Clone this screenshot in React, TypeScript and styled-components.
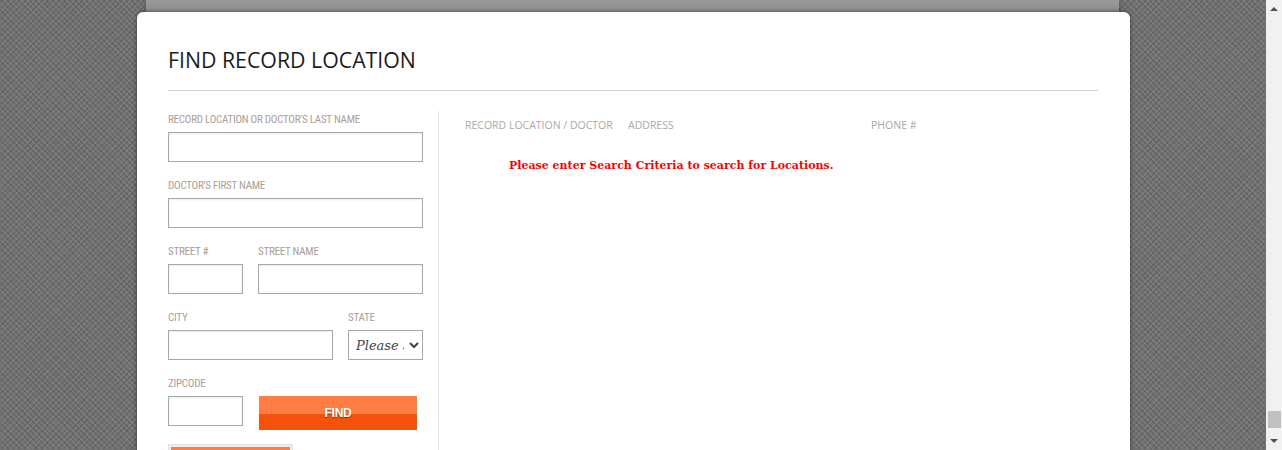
import React from "react";
import styled, { createGlobalStyle } from "styled-components";

const GlobalStyle = createGlobalStyle`
  html, body {
    margin: 0;
    padding: 0;
    height: 450px;
    overflow: hidden;
  }
  * {
    box-sizing: border-box;
  }
`;

const Screen = styled.div`
  display: flex;
  width: 1282px;
  height: 450px;
`;

const Viewport = styled.div`
  position: relative;
  flex: 1;
  height: 450px;
  background-color: #6f6f6f;
  background-image: repeating-linear-gradient(
      45deg,
      rgba(255, 255, 255, 0.05) 0 2px,
      rgba(0, 0, 0, 0.05) 2px 4px
    ),
    repeating-linear-gradient(
      -45deg,
      rgba(255, 255, 255, 0.05) 0 2px,
      rgba(0, 0, 0, 0.05) 2px 4px
    );
  overflow: hidden;
`;

const PagePanel = styled.div`
  margin-left: 146px;
  width: 973px;
  height: 450px;
  background: linear-gradient(#9a9a9a, #8a8a8a 14px, #8a8a8a);
  box-shadow: 0 0 6px rgba(0, 0, 0, 0.35);
`;

const Modal = styled.div`
  position: absolute;
  top: 12px;
  left: 137px;
  width: 993px;
  height: 460px;
  background: #fff;
  border-radius: 6px 6px 0 0;
  box-shadow: 0 0 4px rgba(0, 0, 0, 0.5);
  padding: 0 32px 0 31px;
`;

const Title = styled.h1`
  margin: 0;
  padding: 34px 0 16px;
  font-family: "Open Sans", sans-serif;
  font-weight: 400;
  font-size: 21.3px;
  line-height: 28px;
  color: #1c1c1c;
  border-bottom: 1px solid #cfcfcf;
`;

const Body = styled.div`
  display: flex;
  padding-top: 20px;
`;

const SearchForm = styled.div`
  width: 270px;
  padding-top: 1px;
  padding-right: 15px;
  display: flex;
  flex-direction: column;
  gap: 16px;
`;

const Row = styled.div`
  display: flex;
  gap: 15px;
`;

const Field = styled.div<{ $w: number }>`
  width: ${(p) => p.$w}px;
  display: flex;
  flex-direction: column;
`;

const Label = styled.label`
  font-family: "Liberation Sans Narrow", "Roboto Condensed", "Liberation Sans", sans-serif;
  font-stretch: condensed;
  font-size: 11px;
  letter-spacing: -0.25px;
  line-height: 14px;
  text-transform: uppercase;
  color: #a89e96;
  height: 20px;
  padding-top: 1px;
`;

const TextInput = styled.input`
  width: 100%;
  height: 30px;
  border: 1px solid #a8a8a8;
  box-shadow: inset 0 1px 2px rgba(0, 0, 0, 0.08);
  background: #fff;
  margin: 0;
  padding: 0 6px;
  outline: none;
`;

const Select = styled.select`
  width: 100%;
  height: 30px;
  border: 1px solid #a8a8a8;
  background: #fff;
  margin: 0;
  padding: 0 2px 0 3px;
  font-family: "DejaVu Serif", "Liberation Serif", serif;
  font-style: italic;
  font-size: 13px;
  text-overflow: clip;
  color: #444;
  outline: none;
`;

const ZipRow = styled.div`
  display: flex;
  align-items: flex-end;
  gap: 16px;
`;

const FindButton = styled.button<{ $w: number }>`
  width: ${(p) => p.$w}px;
  height: 34px;
  margin: 0 0 -4px;
  border: 0;
  border-radius: 0;
  background: linear-gradient(#ff7c43 0 52%, #f4520b 52% 100%);
  color: #fff;
  font-family: "Liberation Sans Narrow", "Liberation Sans", sans-serif;
  font-stretch: condensed;
  font-weight: 700;
  font-size: 12px;
  letter-spacing: -0.3px;
  text-shadow: 0 1px 1px rgba(0, 0, 0, 0.45);
  cursor: pointer;
`;

const ButtonFrame = styled.div`
  width: 125px;
  margin-top: 2px;
  padding: 2px 2px;
  border: 1px solid #e2e2e2;
  background: #ececec;
`;

const Results = styled.div`
  flex: 1;
  border-left: 1px solid #e1e1e1;
  min-height: 340px;
  padding-left: 26px;
`;

const HeadRow = styled.div`
  display: flex;
  padding-top: 7px;
  font-family: "Open Sans", sans-serif;
  font-size: 10.5px;
  line-height: 14px;
  color: #a8a8a8;
  text-transform: uppercase;
`;

const HeadCell = styled.div<{ $w: number }>`
  width: ${(p) => p.$w}px;
`;

const Message = styled.p`
  margin: 27px 0 0 44px;
  font-family: "DejaVu Serif", "Liberation Serif", serif;
  font-weight: 700;
  font-size: 11px;
  color: #f00;
`;

const Scrollbar = styled.div`
  width: 16px;
  height: 450px;
  background: #f1f1f1;
  display: flex;
  flex-direction: column;
  align-items: center;
`;

const Arrow = styled.div<{ $down?: boolean }>`
  width: 0;
  height: 0;
  margin: ${(p) => (p.$down ? "6px 0 0" : "7px 0 0")};
  border-left: 4px solid transparent;
  border-right: 4px solid transparent;
  ${(p) =>
    p.$down ? "border-top: 4px solid #505050;" : "border-bottom: 4px solid #505050;"}
`;

const Track = styled.div`
  flex: 1;
  width: 100%;
  display: flex;
  flex-direction: column;
  justify-content: flex-end;
  align-items: center;
  padding-bottom: 5px;
`;

const Thumb = styled.div`
  width: 13px;
  height: 17px;
  background: #c1c1c1;
  margin-left: 1px;
`;

const ScrollEnd = styled.div`
  height: 7px;
`;

export default function App() {
  return (
    <Screen>
      <GlobalStyle />
      <Viewport>
        <PagePanel />
        <Modal>
          <Title>FIND RECORD LOCATION</Title>
          <Body>
            <SearchForm>
              <Field $w={255}>
                <Label>Record Location or Doctor's Last Name</Label>
                <TextInput />
              </Field>
              <Field $w={255}>
                <Label>Doctor's First Name</Label>
                <TextInput />
              </Field>
              <Row>
                <Field $w={75}>
                  <Label>Street #</Label>
                  <TextInput />
                </Field>
                <Field $w={165}>
                  <Label>Street Name</Label>
                  <TextInput />
                </Field>
              </Row>
              <Row>
                <Field $w={165}>
                  <Label>City</Label>
                  <TextInput />
                </Field>
                <Field $w={75}>
                  <Label>State</Label>
                  <Select defaultValue="">
                    <option value="">Please Select</option>
                  </Select>
                </Field>
              </Row>
              <ZipRow>
                <Field $w={75}>
                  <Label>Zipcode</Label>
                  <TextInput />
                </Field>
                <FindButton $w={158}>FIND</FindButton>
              </ZipRow>
              <ButtonFrame>
                <FindButton $w={119}>CLEAR</FindButton>
              </ButtonFrame>
            </SearchForm>
            <Results>
              <HeadRow>
                <HeadCell $w={163}>Record Location / Doctor</HeadCell>
                <HeadCell $w={243}>Address</HeadCell>
                <HeadCell $w={100}>Phone #</HeadCell>
              </HeadRow>
              <Message>Please enter Search Criteria to search for Locations.</Message>
            </Results>
          </Body>
        </Modal>
      </Viewport>
      <Scrollbar>
        <Arrow />
        <Track>
          <Thumb />
        </Track>
        <Arrow $down />
        <ScrollEnd />
      </Scrollbar>
    </Screen>
  );
}
